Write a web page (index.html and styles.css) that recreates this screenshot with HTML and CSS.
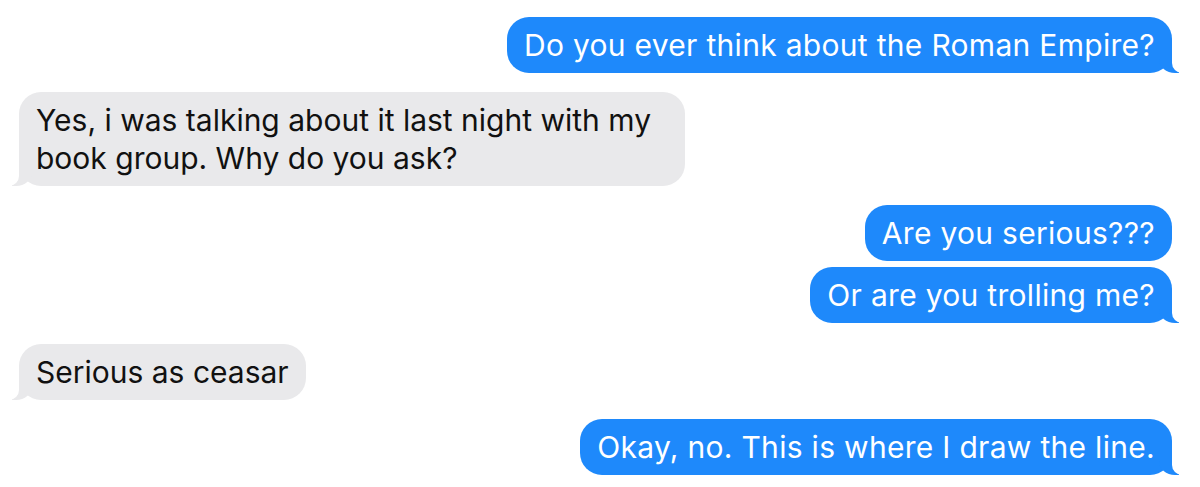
FILE: index.html
```html
<!DOCTYPE html>
<html lang="en">
<head>
<meta charset="utf-8">
<title>Messages</title>
<link rel="stylesheet" href="styles.css">
</head>
<body>
<main class="thread">
  <div class="bubble sent tail">Do you ever think about the Roman Empire?</div>
  <div class="bubble received tail">Yes, i was talking about it last night with my book group. Why do you ask?</div>
  <div class="bubble sent">Are you serious???</div>
  <div class="bubble sent tail tight">Or are you trolling me?</div>
  <div class="bubble received tail loose">Serious as ceasar</div>
  <div class="bubble sent tail">Okay, no. This is where I draw the line.</div>
</main>
</body>
</html>
```

FILE: styles.css
```css
html, body {
  margin: 0;
  padding: 0;
  background: #ffffff;
}

.thread {
  display: flex;
  flex-direction: column;
  gap: 19px;
  padding: 17px 28px 0 19px;
  font-family: "Inter", "Noto Sans", sans-serif;
  font-size: 30px;
  line-height: 38px;
}

.bubble {
  position: relative;
  max-width: 632px;
  padding: 9px 17px;
  border-radius: 22px;
}

.sent {
  align-self: flex-end;
  background: #1e89fb;
  color: #ffffff;
  letter-spacing: 0.3px;
}

.received {
  align-self: flex-start;
  background: #e9e9eb;
  color: #111111;
}

.tight {
  margin-top: -13px;
}

.loose {
  margin-top: 2px;
}

.tail::before,
.tail::after {
  content: "";
  position: absolute;
  bottom: 0;
  height: 22px;
}

.sent.tail::before {
  right: -7px;
  width: 20px;
  background: #1e89fb;
  border-bottom-left-radius: 16px 14px;
}

.sent.tail::after {
  right: -10px;
  width: 10px;
  background: #ffffff;
  border-bottom-left-radius: 10px;
}

.received.tail::before {
  left: -7px;
  width: 20px;
  background: #e9e9eb;
  border-bottom-right-radius: 16px 14px;
}

.received.tail::after {
  left: -10px;
  width: 10px;
  background: #ffffff;
  border-bottom-right-radius: 10px;
}
```
